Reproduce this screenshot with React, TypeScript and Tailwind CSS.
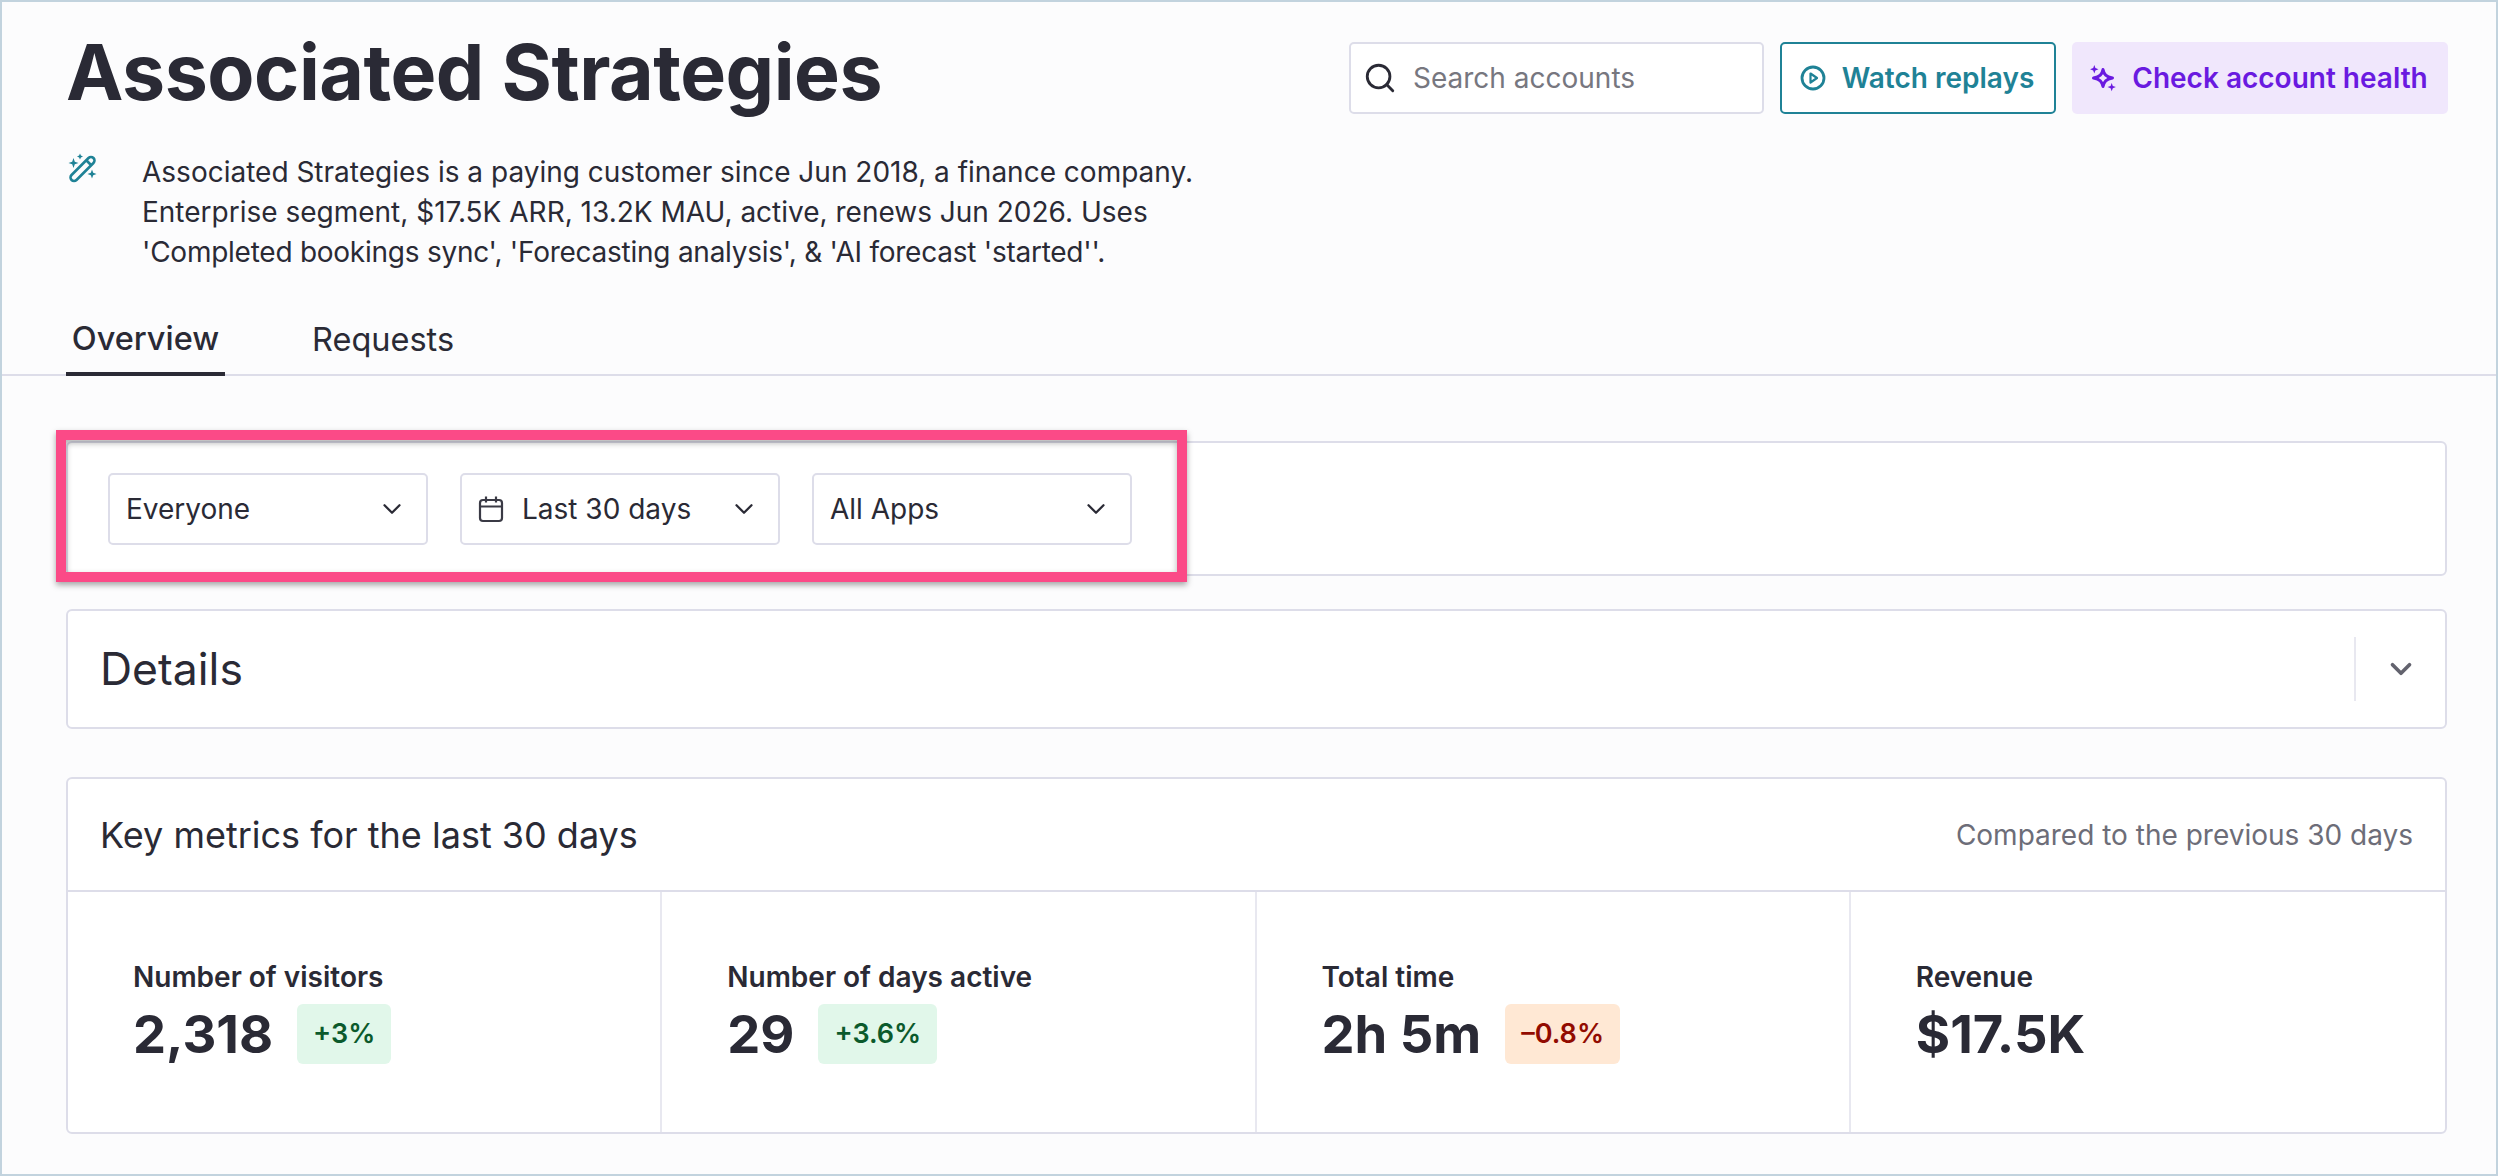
import { ChevronDown, Search } from 'lucide-react';

const metrics = [
  { label: 'Number of visitors', value: '2,318', delta: '+3%', good: true },
  { label: 'Number of days active', value: '29', delta: '+3.6%', good: true },
  { label: 'Total time', value: '2h 5m', delta: '–0.8%', good: false },
  { label: 'Revenue', value: '$17.5K' },
];

function WandIcon() {
  return (
    <svg width="30" height="30" viewBox="12 12 30 30" fill="none" stroke="#1f8296" strokeWidth="2.6" strokeLinejoin="round">
      <rect x="11" y="24.500" width="31" height="7" rx="3.500" transform="rotate(-45 26.500 28)" />
      <path d="M30.500 19.500l5 5" />
      <path fill="#1f8296" stroke="none" d="M17.500 17l1.300 3.700 3.700 1.300-3.700 1.300-1.300 3.700-1.300-3.700-3.700-1.300 3.700-1.300ZM24 12.500l.9 2.100 2.100.9-2.100.9-.9 2.100-.9-2.100-2.100-.9 2.100-.9ZM36 28.500l1.200 3.300 3.300 1.200-3.300 1.200-1.200 3.300-1.200-3.300-3.300-1.200 3.300-1.200Z" />
    </svg>
  );
}

function PlayCircle() {
  return (
    <svg width="28" height="28" viewBox="0 0 28 28" fill="none" stroke="#1f8296" strokeWidth="2.800">
      <circle cx="14" cy="14" r="11" />
      <path d="M11.500 9.500 18 14l-6.500 4.500Z" strokeWidth="2.200" strokeLinejoin="round" />
    </svg>
  );
}

function SparkleIcon() {
  return (
    <svg width="30" height="30" viewBox="8 13 30 30" fill="none" stroke="#6a1ae0" strokeWidth="3" strokeLinejoin="round">
      <path d="M22 19.500c1 5 3 7.200 9.500 8.500-6.500 1.300-8.500 3.500-9.500 8.500-1-5-3-7.200-9.500-8.500 6.500-1.300 8.500-3.500 9.500-8.500Z" />
      <path fill="#6a1ae0" stroke="none" d="M13.300 15l1.100 3.100 3.100 1.200-3.100 1.200-1.100 3.100-1.100-3.100-3.100-1.200 3.100-1.200ZM30.700 33l1.100 3 3.100 1.100-3.100 1.100-1.100 3-1.100-3-3.100-1.100 3.100-1.100Z" />
    </svg>
  );
}

function CalendarIcon() {
  return (
    <svg width="26" height="28" viewBox="0 0 26 28" fill="none" stroke="#3a3a45" strokeWidth="2.200" strokeLinejoin="round">
      <rect x="2" y="5" width="22" height="21" rx="3" />
      <path d="M2 11.500h22M8 1.500v6M18 1.500v6" />
    </svg>
  );
}

function Select({ label, calendar }: { label: string; calendar?: boolean }) {
  return (
    <div className="flex h-[72px] w-[320px] items-center rounded-[5px] border-2 border-[#dddde9] bg-white pr-[19px] pl-4">
      {calendar && (
        <span className="mr-[18px] flex">
          <CalendarIcon />
        </span>
      )}
      <span className="flex-1 text-[28px] text-[#2a2a35]">{label}</span>
      <ChevronDown size={30} strokeWidth={1.8} className="text-[#2a2a35]" />
    </div>
  );
}

export default function App() {
  return (
    <div className="relative h-[1176px] w-[2498px] overflow-hidden border-2 border-[#c2d3de] bg-[#fcfcfd] font-['Inter',sans-serif] text-[#2a2a35]">
      <header className="flex items-start justify-between pr-[48px] pl-[64px]">
        <div>
          <h1 className="mt-[27px] text-[77px] leading-[86px] font-bold tracking-[-0.5px]">Associated Strategies</h1>
          <div className="mt-[37px] flex">
            <span className="mt-[1px] mr-[44px] ml-[2px] flex">
              <WandIcon />
            </span>
            <p className="w-[1100px] text-[28px] leading-[40px]">
              Associated Strategies is a paying customer since Jun 2018, a finance company.
              <br />
              Enterprise segment, $17.5K ARR, 13.2K MAU, active, renews Jun 2026. Uses
              <br />
              <span className="tracking-[-0.25px]">'Completed bookings sync', 'Forecasting analysis', &amp; 'AI forecast 'started''.</span>
            </p>
          </div>
        </div>
        <div className="mt-[40px] flex gap-4">
          <div className="flex h-[72px] w-[415px] items-center gap-[16px] rounded-[5px] border-2 border-[#dddde9] bg-white pl-3">
            <Search size={34} strokeWidth={2} className="text-[#2a2a35]" />
            <span className="text-[28px] text-[#77777f]">Search accounts</span>
          </div>
          <div className="flex h-[72px] w-[276px] items-center justify-center gap-[15px] rounded-[5px] border-2 border-[#1f8296] bg-white pr-[3px]">
            <PlayCircle />
            <span className="text-[28px] font-semibold text-[#1f8296]">Watch replays</span>
          </div>
          <div className="flex h-[72px] w-[376px] items-center justify-center gap-[13px] rounded-[5px] bg-[#f0e7fc] pr-[3px]">
            <SparkleIcon />
            <span className="text-[28px] font-semibold text-[#6a1ae0]">Check account health</span>
          </div>
        </div>
      </header>

      <nav className="mt-[34px] flex h-[70px] items-stretch gap-[87px] border-b-2 border-[#dddde9] pl-[64px]">
        <div className="-mb-[2px] flex w-[159px] items-center justify-center border-b-4 border-[#2a2a35] text-[32.500px] font-medium">Overview</div>
        <div className="flex items-center text-[32.500px]">Requests</div>
      </nav>

      <main className="flex flex-col pt-[65px] pr-[49px] pl-[64px]">
        <section className="flex h-[135px] items-center gap-[32px] rounded-[6px] border-2 border-[#dddde9] bg-white pl-[40px]">
          <Select label="Everyone" />
          <Select label="Last 30 days" calendar />
          <Select label="All Apps" />
        </section>

        <section className="mt-[33px] flex h-[120px] items-center rounded-[6px] border-2 border-[#dddde9] bg-white pl-[32px]">
          <h2 className="flex-1 text-[44.500px] font-normal">Details</h2>
          <div className="flex h-[64px] w-[91px] items-center justify-center border-l-2 border-[#e8e8f0]">
            <ChevronDown size={34} strokeWidth={2.600} className="text-[#63636e]" />
          </div>
        </section>

        <section className="mt-[48px] rounded-[6px] border-2 border-[#dddde9] bg-white">
          <div className="flex h-[113px] items-center justify-between border-b-2 border-[#dddde9] px-[32px]">
            <h3 className="text-[36px] font-normal">Key metrics for the last 30 days</h3>
            <span className="text-[28px] text-[#6d6d78]">Compared to the previous 30 days</span>
          </div>
          <div className="grid h-[240px] grid-cols-4">
            {metrics.map((m, i) => (
              <div key={m.label} className={`flex flex-col justify-center pl-[65px] ${i < 3 ? 'border-r-2 border-[#e8e8f0]' : ''}`}>
                <div className="text-[28px] leading-[34px] font-semibold">{m.label}</div>
                <div className="mt-[10px] flex items-center gap-6">
                  <span className="text-[52.500px] leading-[60px] font-bold">{m.value}</span>
                  {m.delta && (
                    <span
                      className={`flex h-[60px] items-center rounded-[6px] px-4 text-[27px] font-semibold ${
                        m.good ? 'bg-[#e1f7ea] text-[#0b5a2c]' : 'bg-[#ffe8d4] text-[#920b00]'
                      }`}
                    >
                      {m.delta}
                    </span>
                  )}
                </div>
              </div>
            ))}
          </div>
        </section>
      </main>

      {/* annotation box drawn over the screenshot */}
      <div className="absolute top-[428px] left-[54px] h-[152px] w-[1131px] border-[10px] border-[#fb4a87] shadow-[0_3px_6px_rgba(0,0,0,0.35),inset_0_3px_6px_rgba(0,0,0,0.3)]" />
    </div>
  );
}
